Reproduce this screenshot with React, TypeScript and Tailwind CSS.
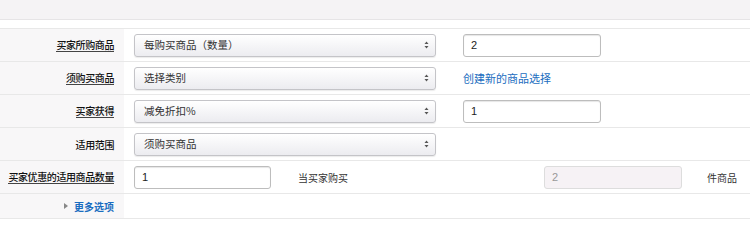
import React from "react";

const font = { fontFamily: '"Noto Sans CJK SC", "Liberation Sans", sans-serif' };

const Label: React.FC<{ text: string; underline?: boolean }> = ({ text, underline = true }) => (
    <div className="w-[124px] shrink-0 bg-[#f8f7f8] flex items-center justify-end pr-[10px]">
        <span
            className={`whitespace-nowrap text-[10px] leading-[13px] font-medium text-[#111] tracking-[-0.4px] ${underline ? "border-b border-[#444]" : ""
                }`}
        >
            {text}
        </span>
    </div>
);

const Arrows = () => (
    <svg width="5" height="8" viewBox="0 0 5 8" className="text-[#555]">
        <path d="M2.5 0.5 L4.5 3 L0.5 3 Z" fill="currentColor" />
        <path d="M2.5 7.5 L4.5 5 L0.5 5 Z" fill="currentColor" />
    </svg>
);

const Select: React.FC<{ value: string }> = ({ value }) => (
    <div className="w-[302px] h-[23px] rounded-[3px] border border-[#c4c4c8] bg-gradient-to-b from-white to-[#ececf0] shadow-[0_1px_1px_rgba(0,0,0,0.08)] flex items-center justify-between pl-[9px] pr-[6px]">
        <span className="text-[10.5px] text-[#333] whitespace-nowrap">{value}</span>
        <Arrows />
    </div>
);

const Input: React.FC<{ value: string; w: string; disabled?: boolean }> = ({ value, w, disabled }) => (
    <div
        className={`${w} h-[23px] rounded-[3px] flex items-center pl-[7px] text-[11px] ${disabled
            ? "bg-[#f6f2f5] border border-[#ddd] text-[#999]"
            : "bg-white border border-[#bdbdbd] shadow-[inset_0_1px_1px_rgba(0,0,0,0.1)] text-[#222]"
            }`}
        style={{ fontFamily: '"Liberation Sans", sans-serif' }}
    >
        {value}
    </div>
);

const Row: React.FC<{ label: string; underline?: boolean; children: React.ReactNode }> = ({ label, underline, children }) => (
    <div className="flex h-[33px] border-b border-[#e8e8e8]">
        <Label text={label} underline={underline} />
        <div className="flex-1 flex items-center pl-[10px]">{children}</div>
    </div>
);

export default function App() {
    return (
        <div className="w-[750px] h-[225px] bg-white overflow-hidden" style={font}>
            <div className="h-[20px] bg-[#f5f3f5] border-b border-[#e6e4e6]" />
            <div className="h-[8px]" />
            <div className="border-t border-[#e8e8e8]">
                <Row label="买家所购商品">
                    <Select value="每购买商品（数量）" />
                    <div className="ml-[27px]">
                        <Input value="2" w="w-[138px]" />
                    </div>
                </Row>
                <Row label="须购买商品">
                    <Select value="选择类别" />
                    <a className="ml-[27px] text-[11px] text-[#1a6dc0] cursor-pointer whitespace-nowrap">创建新的商品选择</a>
                </Row>
                <Row label="买家获得">
                    <Select value="减免折扣%" />
                    <div className="ml-[27px]">
                        <Input value="1" w="w-[138px]" />
                    </div>
                </Row>
                <Row label="适用范围" underline={false}>
                    <Select value="须购买商品" />
                </Row>
                <Row label="买家优惠的适用商品数量">
                    <Input value="1" w="w-[137px]" />
                    <span className="ml-[27px] w-[246px] text-[10px] text-[#333] whitespace-nowrap">当买家购买</span>
                    <Input value="2" w="w-[138px]" disabled />
                    <span className="ml-[25px] text-[10px] text-[#333] whitespace-nowrap">件商品</span>
                </Row>
                <div className="flex h-[25px] border-b border-[#e8e8e8]">
                    <div className="w-[124px] shrink-0 bg-[#f8f7f8] flex items-center justify-end pr-[10px] gap-[6px]">
                        <svg width="4" height="6" viewBox="0 0 4 6">
                            <path d="M0 0 L4 3 L0 6 Z" fill="#888" />
                        </svg>
                        <span className="text-[10px] font-bold text-[#1a6dc0] whitespace-nowrap">更多选项</span>
                    </div>
                    <div className="flex-1" />
                </div>
            </div>
        </div>
    );
}
